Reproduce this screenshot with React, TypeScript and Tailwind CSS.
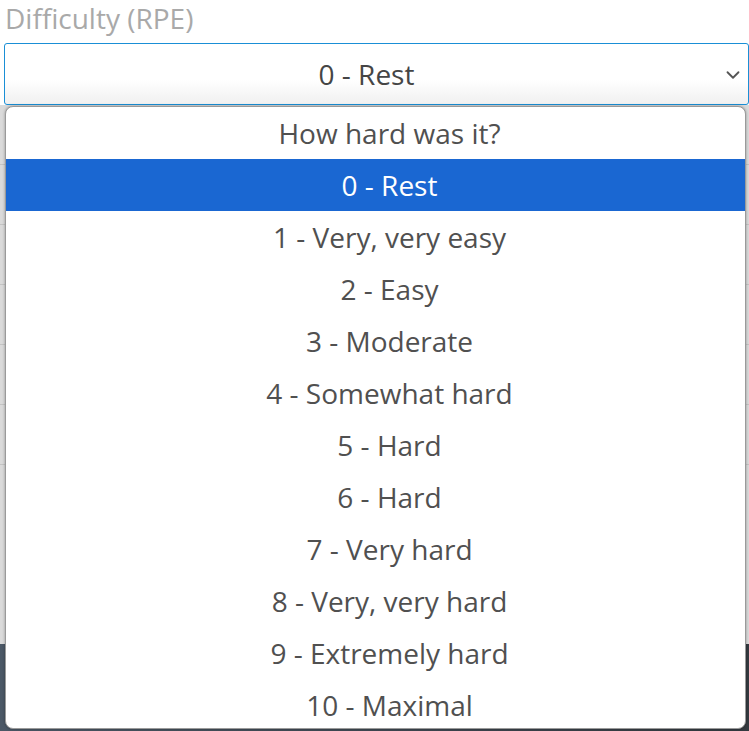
import { ChevronDown } from "lucide-react";

const options = [
  "0 - Rest",
  "1 - Very, very easy",
  "2 - Easy",
  "3 - Moderate",
  "4 - Somewhat hard",
  "5 - Hard",
  "6 - Hard",
  "7 - Very hard",
  "8 - Very, very hard",
  "9 - Extremely hard",
  "10 - Maximal",
];

export default function App() {
  const selected = 0;

  return (
    <div className="relative h-[731px] w-[749px] overflow-hidden bg-white font-['Open_Sans',sans-serif]">
      <div className="px-[5px]">
        <label className="block text-[28px] leading-[36px] text-[#a9a9a9]">
          Difficulty (RPE)
        </label>
      </div>
      <div className="mt-[7px] pl-[4px]">
        <div className="relative flex h-[62px] items-center justify-center rounded-[3px] border border-[#1a8fd6] bg-gradient-to-b from-white from-60% to-[#f0f0f0] pr-[20px] text-[28px] text-[#454545]">
          0 - Rest
          <ChevronDown
            className="absolute right-[4px] top-[20px] text-[#555]"
            size={22}
            strokeWidth={2}
          />
        </div>
      </div>

      {/* page content behind the open list */}
      <div className="flex h-[539px] flex-col bg-[#dadada]">
        {Array.from({ length: 6 }).map((_, i) => (
          <div key={i} className="h-[60px] border-b border-[#c4c4c4]" />
        ))}
      </div>
      <div className="h-[200px] bg-gradient-to-r from-[#4b5866] to-[#343a40]" />

      <div className="absolute left-[5px] top-[106px] h-[623px] w-[741px] overflow-hidden rounded-[8px] border-[1.5px] border-[#9a9a9a] bg-white shadow-[0_0_3px_rgba(0,0,0,0.35)]">
        <div className="flex h-[52px] items-center justify-center pl-[28px] text-[28px] text-[#505050]">
          How hard was it?
        </div>
        {options.map((o, i) => (
          <div
            key={o}
            className={
              i === selected
                ? "flex h-[52px] items-center justify-center bg-[#1a67d2] pl-[28px] text-[28px] text-white"
                : "flex h-[52px] items-center justify-center pl-[28px] text-[28px] text-[#505050]"
            }
          >
            {o}
          </div>
        ))}
      </div>
    </div>
  );
}
